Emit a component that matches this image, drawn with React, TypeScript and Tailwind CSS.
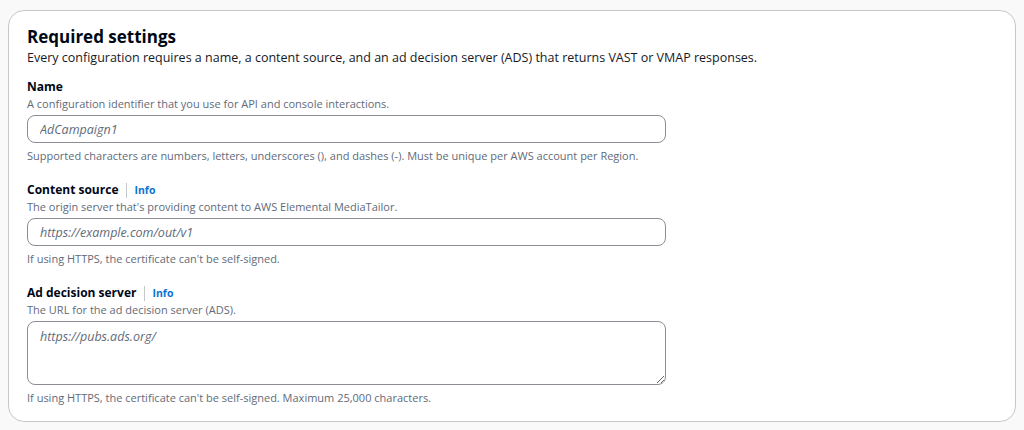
import React from "react";

const font = { fontFamily: '"Open Sans", "Noto Sans", Arial, sans-serif' };

function InfoLink() {
  return (
    <>
      <span className="ml-[8px] mr-[7px] h-[15px] w-px bg-[#c6c6cd]" />
      <a href="#" className="text-[10.5px] font-bold leading-[16px] text-[#0972d3]">
        Info
      </a>
    </>
  );
}

type FieldProps = {
  label: string;
  info?: boolean;
  description: string;
  constraint: string;
  placeholder: string;
  multiline?: boolean;
};

function Field({ label, info, description, constraint, placeholder, multiline }: FieldProps) {
  return (
    <div className="flex flex-col">
      <div className="flex items-center">
        <label className="text-[12px] font-bold leading-[18px] text-[#000716]">{label}</label>
        {info && <InfoLink />}
      </div>
      <p className="text-[11px] leading-[16px] text-[#5f6b7a]">{description}</p>
      {multiline ? (
        <textarea
          placeholder={placeholder}
          className="mt-[3px] h-[64px] w-[639px] rounded-lg border border-[#8c8c94] px-3 py-[5px] text-[12.5px] leading-[20px] text-[#000716] outline-none placeholder:italic placeholder:text-[#5f6b7a]"
        />
      ) : (
        <input
          placeholder={placeholder}
          className="mt-[3px] h-[28px] w-[639px] rounded-lg border border-[#8c8c94] px-3 text-[12.5px] text-[#000716] outline-none placeholder:italic placeholder:text-[#5f6b7a]"
        />
      )}
      <p className="mt-[5px] text-[11px] leading-[16px] text-[#5f6b7a]">{constraint}</p>
    </div>
  );
}

export default function App() {
  return (
    <main style={font} className="h-[430px] w-full bg-[#f9f9f9] px-2 pt-[10px]">
      <section className="h-[412px] rounded-2xl border border-[#c6c6cd] bg-white px-[18px] pt-[14px]">
        <h2 className="text-[17px] font-bold leading-[24px] text-[#000716]">Required settings</h2>
        <p className="text-[12.5px] leading-[17px] text-[#16191f]">
          Every configuration requires a name, a content source, and an ad decision server (ADS) that returns VAST or
          VMAP responses.
        </p>
        <div className="mt-[12px] flex flex-col gap-[17px]">
          <Field
            label="Name"
            description="A configuration identifier that you use for API and console interactions."
            placeholder="AdCampaign1"
            constraint="Supported characters are numbers, letters, underscores (), and dashes (-). Must be unique per AWS account per Region."
          />
          <Field
            label="Content source"
            info
            description="The origin server that's providing content to AWS Elemental MediaTailor."
            placeholder="https://example.com/out/v1"
            constraint="If using HTTPS, the certificate can't be self-signed."
          />
          <Field
            label="Ad decision server"
            info
            multiline
            description="The URL for the ad decision server (ADS)."
            placeholder="https://pubs.ads.org/"
            constraint="If using HTTPS, the certificate can't be self-signed. Maximum 25,000 characters."
          />
        </div>
      </section>
    </main>
  );
}
